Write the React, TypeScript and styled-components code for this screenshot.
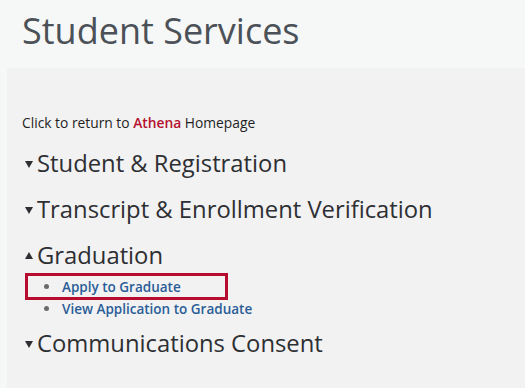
import React from "react";
import styled, { createGlobalStyle } from "styled-components";

const Global = createGlobalStyle`
  html, body {
    margin: 0;
    padding: 0;
    background: #f6f7f7;
    font-family: "Open Sans", "Noto Sans", sans-serif;
  }
`;

const Header = styled.h1`
  margin: 0;
  height: 68px;
  padding: 9px 0 0 22px;
  box-sizing: border-box;
  font-size: 36px;
  font-weight: 400;
  line-height: 44px;
  color: #4b5157;
`;

const Panel = styled.div`
  margin-left: 7px;
  background: #f2f2f2;
  min-height: 320px;
  padding: 45px 15px 0 15px;
  box-sizing: border-box;
`;

const ReturnLine = styled.p`
  margin: 0;
  font-size: 13.8px;
  line-height: 19px;
  color: #1f1f1f;
`;

const Athena = styled.a`
  color: #b5102f;
  font-weight: 600;
  text-decoration: none;
`;

const Section = styled.div<{ gap?: number }>`
  margin-top: ${(p) => p.gap ?? 14}px;
`;

const Heading = styled.h2`
  margin: 0;
  display: flex;
  align-items: center;
  font-size: 23.8px;
  font-weight: 400;
  line-height: 32px;
  color: #2e2f33;
`;

const Caret = styled.span<{ open?: boolean }>`
  display: inline-block;
  width: 0;
  height: 0;
  margin: 3px 4px 0 3px;
  border-left: 4px solid transparent;
  border-right: 4px solid transparent;
  ${(p) =>
    p.open
      ? "border-bottom: 7px solid #2e2f33; margin-top: 1px;"
      : "border-top: 7px solid #2e2f33;"}
`;

const LinkList = styled.ul`
  margin: 2px 0 0 0;
  padding: 0 0 0 3px;
  list-style: none;
`;

const LinkItem = styled.li<{ highlight?: boolean }>`
  display: flex;
  align-items: center;
  width: ${(p) => (p.highlight ? "181px" : "auto")};
  height: ${(p) => (p.highlight ? "21px" : "19px")};
  padding-left: 16px;
  border: 3px solid ${(p) => (p.highlight ? "#b80c2f" : "transparent")};
  margin-top: ${(p) => (p.highlight ? "0" : "-4px")};
  white-space: nowrap;

  &::before {
    content: "";
    flex-shrink: 0;
    width: 5px;
    height: 5px;
    border-radius: 50%;
    background: #6b6b6b;
    margin-right: 13px;
  }
`;

const Link = styled.a`
  font-size: 13.5px;
  font-weight: 600;
  color: #2a5d98;
  text-decoration: none;
`;

export default function App() {
  return (
    <>
      <Global />
      <Header>Student Services</Header>
      <Panel>
        <ReturnLine>
          Click to return to <Athena href="#">Athena</Athena> Homepage
        </ReturnLine>
        <Section gap={15}>
          <Heading>
            <Caret />
            Student &amp; Registration
          </Heading>
        </Section>
        <Section>
          <Heading>
            <Caret />
            Transcript &amp; Enrollment Verification
          </Heading>
        </Section>
        <Section>
          <Heading>
            <Caret open />
            Graduation
          </Heading>
          <LinkList>
            <LinkItem highlight>
              <Link href="#">Apply to Graduate</Link>
            </LinkItem>
            <LinkItem>
              <Link href="#">View Application to Graduate</Link>
            </LinkItem>
          </LinkList>
        </Section>
        <Section gap={6}>
          <Heading>
            <Caret />
            Communications Consent
          </Heading>
        </Section>
      </Panel>
    </>
  );
}
